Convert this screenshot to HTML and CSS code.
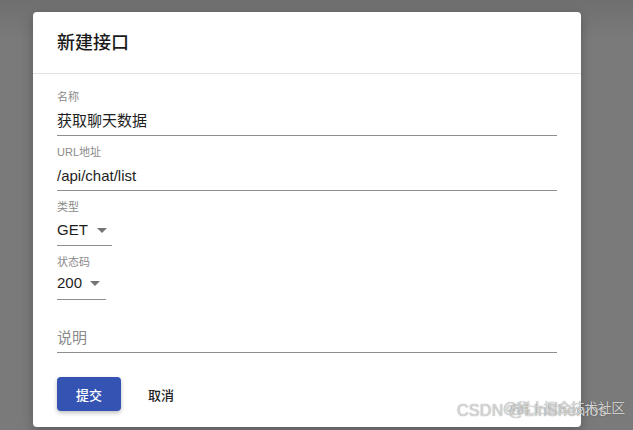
FILE: index.html
```html
<!DOCTYPE html>
<html lang="zh">
<head>
<meta charset="utf-8">
<link rel="stylesheet" href="styles.css">
</head>
<body>
<div class="backdrop">
  <div class="dialog">
    <div class="dialog-header">新建接口</div>
    <div class="dialog-body">
      <div class="field field-full">
        <div class="label">名称</div>
        <div class="value">获取聊天数据</div>
      </div>
      <div class="field field-full">
        <div class="label">URL地址</div>
        <div class="value">/api/chat/list</div>
      </div>
      <div class="field field-select select-type">
        <div class="label">类型</div>
        <div class="value">GET<span class="caret"></span></div>
      </div>
      <div class="field field-select select-code">
        <div class="label">状态码</div>
        <div class="value">200<span class="caret"></span></div>
      </div>
      <div class="field field-full field-desc">
        <div class="value placeholder">说明</div>
      </div>
      <div class="actions">
        <button class="btn btn-primary">提交</button>
        <button class="btn btn-text">取消</button>
      </div>
    </div>
  </div>
  <div class="watermark"><span class="wm-a">CSDN @LinShenios</span><span class="wm-b">@稀土掘金技术社区</span></div>
</div>
</body>
</html>
```
FILE: styles.css
```css
* { box-sizing: border-box; }
html, body { margin: 0; padding: 0; }
body {
  width: 633px;
  height: 430px;
  overflow: hidden;
  font-family: "Liberation Sans", "Noto Sans CJK SC", sans-serif;
  background: #7b7b7b;
}
.backdrop {
  position: relative;
  width: 633px;
  height: 430px;
  padding: 12px 0 0 33px;
  background: linear-gradient(to bottom, #6f6f6f 0px, #7a7a7a 40px, #7a7a7a 100%);
}
.dialog {
  width: 548px;
  height: 415px;
  background: #fff;
  border-radius: 4px;
  box-shadow: 0 4px 12px rgba(0,0,0,0.25);
}
.dialog-header {
  height: 62px;
  padding: 19px 24px 0;
  font-size: 18px;
  font-weight: 500;
  color: #1a1a1a;
  line-height: 24px;
  border-bottom: 1px solid #e2e2e2;
}
.dialog-body {
  padding: 7px 24px 0;
  display: flex;
  flex-direction: column;
  align-items: flex-start;
}
.field {
  margin-top: 9px;
  border-bottom: 1px solid #8e8e8e;
}
.field-full { width: 500px; }
.label {
  font-size: 11px;
  line-height: 14px;
  color: #8a8a8a;
}
.value {
  font-size: 15px;
  line-height: 20px;
  color: #1e1e1e;
  padding: 7px 0 4px;
  display: flex;
  align-items: center;
}
.select-type { width: 55px; }
.select-type .value { padding-top: 6px; padding-bottom: 5px; }
.select-code { width: 49px; }
.select-code .value { padding-top: 4px; padding-bottom: 6px; }
.caret {
  display: inline-block;
  width: 0;
  height: 0;
  border-left: 5px solid transparent;
  border-right: 5px solid transparent;
  border-top: 5px solid #757575;
  margin-left: 9px;
}
.select-code .caret { margin-left: 8px; }
.field-desc { margin-top: 28px; }
.placeholder { color: #8a8a8a; padding: 0 0 4px; }
.actions {
  margin-top: 24px;
  display: flex;
  align-items: center;
  gap: 18px;
}
.btn {
  font-family: "Liberation Sans", "Noto Sans CJK SC", sans-serif;
  font-size: 13px;
  font-weight: 500;
  border: none;
  background: none;
  cursor: pointer;
}
.btn-primary {
  width: 64px;
  height: 34px;
  background: #3553b3;
  color: #fff;
  border-radius: 4px;
  box-shadow: 0 2px 4px rgba(0,0,0,0.25);
}
.btn-text {
  color: #222;
  padding: 0 9px;
}
.watermark {
  position: absolute;
  left: 457px;
  top: 402px;
  font-size: 16px;
  color: rgba(225,225,225,0.9);
  white-space: nowrap;
  text-shadow: 0 0 1px rgba(0,0,0,0.5);
}
.wm-a { position: absolute; left: 0; top: 0; letter-spacing: 0.3px; }
.wm-b { position: absolute; left: 46px; top: -5px; font-size: 14px; letter-spacing: -0.5px; }
```
